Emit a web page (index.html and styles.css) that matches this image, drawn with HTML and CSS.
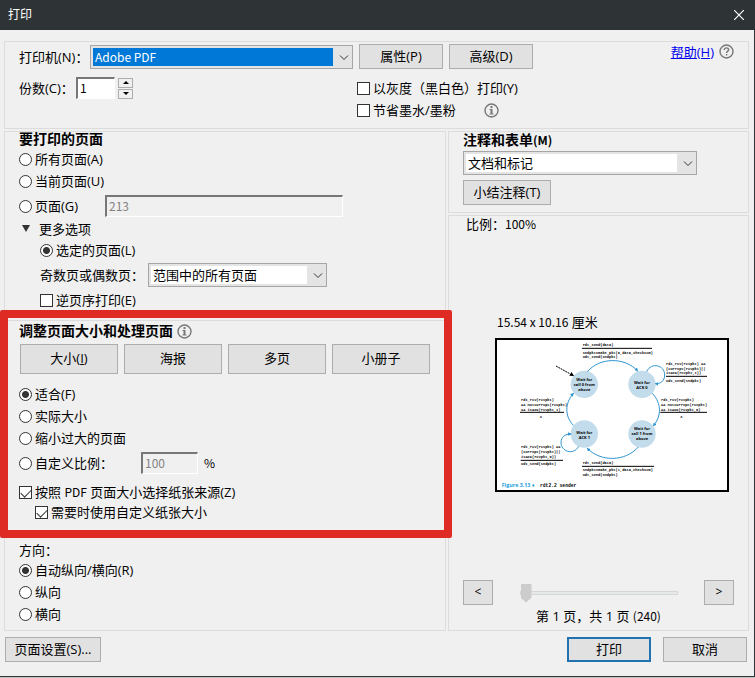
FILE: index.html
```html
<!DOCTYPE html>
<html lang="zh-CN">
<head>
<meta charset="utf-8">
<title>打印</title>
<link rel="stylesheet" href="styles.css">
</head>
<body>
<form class="dialog">
  <header class="titlebar">
    <h1 class="title">打印</h1>
    <button class="close" type="button" aria-label="关闭">
      <svg width="10" height="10" viewBox="0 0 10 10"><path d="M0 0L10 10M10 0L0 10" stroke="#fff" stroke-width="1.2"/></svg>
    </button>
  </header>

  <main class="content">
    <section class="group printer">
      <div class="printer-main">
        <div class="printer-row">
          <label for="printer">打印机(N)：</label>
          <span class="select printer-select">
            <select id="printer" class="focused latin"><option>Adobe PDF</option></select>
            <svg class="chevron" width="10" height="6" viewBox="0 0 10 6"><path d="M1 .5L5 4.5L9 .5"/></svg>
          </span>
          <button class="btn wide" type="button">属性(P)</button>
          <button class="btn wide" type="button">高级(D)</button>
        </div>
        <div class="copies-row">
          <div class="copies">
            <label for="copies">份数(C)：</label>
            <input id="copies" class="field copies-field latin" type="text" value="1">
            <span class="spinner">
              <button type="button" aria-label="增加"><svg width="6" height="3" viewBox="0 0 6 3"><path d="M3 0L6 3H0z"/></svg></button>
              <button type="button" aria-label="减少"><svg width="6" height="3" viewBox="0 0 6 3"><path d="M3 3L6 0H0z"/></svg></button>
            </span>
          </div>
          <div class="ink">
            <label class="row"><input type="checkbox">以灰度（黑白色）打印(Y)</label>
            <div class="row ink-save">
              <label class="row"><input type="checkbox">节省墨水/墨粉</label>
              <svg class="info" width="15" height="15" viewBox="0 0 15 15"><circle cx="7.5" cy="7.5" r="6.5"/><path class="glyph" d="M6.5 3h2v2h-2zM5.5 6h3v4.5h1v1h-4v-1h1V7h-1z"/></svg>
            </div>
          </div>
        </div>
      </div>
      <div class="help">
        <a href="#help">帮助(H)</a>
        <svg class="info" width="15" height="15" viewBox="0 0 15 15"><circle cx="7.5" cy="7.5" r="6.5"/><path d="M5.3 6C5.3 3.2 9.7 3.2 9.7 5.8C9.7 7.2 7.6 7.2 7.6 9M7.6 10V11.4"/></svg>
      </div>
    </section>

    <div class="columns">
      <div class="column">
        <section class="group pages">
          <h2>要打印的页面</h2>
          <label class="row"><input type="radio" name="range">所有页面(A)</label>
          <label class="row"><input type="radio" name="range">当前页面(U)</label>
          <div class="row tall">
            <label class="row range-label"><input type="radio" name="range">页面(G)</label>
            <input class="field disabled range-field latin" type="text" value="213" aria-label="页面范围" disabled>
          </div>
          <button class="more" type="button"><svg width="8" height="7" viewBox="0 0 8 7"><path d="M0 0H8L4 7z" fill="#333"/></svg>更多选项</button>
          <div class="nested">
            <label class="row"><input type="radio" name="selected" checked>选定的页面(L)</label>
            <div class="row tall">
              <label class="subset-label" for="subset">奇数页或偶数页：</label>
              <span class="select subset-select">
                <select id="subset"><option>范围中的所有页面</option></select>
                <svg class="chevron" width="10" height="6" viewBox="0 0 10 6"><path d="M1 .5L5 4.5L9 .5"/></svg>
              </span>
            </div>
            <label class="row"><input type="checkbox">逆页序打印(E)</label>
          </div>
        </section>

        <section class="group sizing">
          <div class="heading-row">
            <h2>调整页面大小和处理页面</h2>
            <svg class="info" width="15" height="15" viewBox="0 0 15 15"><circle cx="7.5" cy="7.5" r="6.5"/><path class="glyph" d="M6.5 3h2v2h-2zM5.5 6h3v4.5h1v1h-4v-1h1V7h-1z"/></svg>
          </div>
          <div class="modes">
            <button class="btn" type="button">大小(<u>I</u>)</button>
            <button class="btn" type="button">海报</button>
            <button class="btn" type="button">多页</button>
            <button class="btn" type="button">小册子</button>
          </div>
          <label class="row"><input type="radio" name="scale" checked>适合(F)</label>
          <label class="row"><input type="radio" name="scale">实际大小</label>
          <label class="row"><input type="radio" name="scale">缩小过大的页面</label>
          <div class="row tall">
            <label class="row scale-label"><input type="radio" name="scale">自定义比例：</label>
            <input class="field disabled scale-field latin" type="text" value="100" aria-label="自定义比例" disabled>
            <span class="latin">%</span>
          </div>
          <div class="paper">
            <label class="row"><input type="checkbox" checked><span>按照 <span class="latin">PDF</span> 页面大小选择纸张来源(Z)</span></label>
            <label class="row custom"><input type="checkbox" checked>需要时使用自定义纸张大小</label>
          </div>
          <h3>方向：</h3>
          <label class="row"><input type="radio" name="orientation" checked>自动纵向/横向(R)</label>
          <label class="row"><input type="radio" name="orientation">纵向</label>
          <label class="row"><input type="radio" name="orientation">横向</label>
          <div class="highlight"></div>
        </section>
      </div>

      <div class="column">
        <section class="group comments">
          <h2><label for="comments">注释和表单<span class="latin">(M)</span></label></h2>
          <span class="select comments-select">
            <select id="comments"><option>文档和标记</option></select>
            <svg class="chevron" width="10" height="6" viewBox="0 0 10 6"><path d="M1 .5L5 4.5L9 .5"/></svg>
          </span>
          <button class="btn summary" type="button">小结注释(T)</button>
        </section>

        <section class="group preview">
          <p class="zoom">比例：<span class="latin">100%</span></p>
          <figure class="sheet">
            <figcaption><span class="latin">15.54 x 10.16</span> 厘米</figcaption>
            <svg class="page" viewBox="15 84 702 462">
              <defs>
                <marker id="tip" viewBox="0 0 10 10" refX="8" refY="5" markerWidth="11" markerHeight="11" markerUnits="userSpaceOnUse" orient="auto"><path d="M0 0L10 5L0 10z" fill="#2f95cf"/></marker>
                <marker id="tip-dark" viewBox="0 0 10 10" refX="8" refY="5" markerWidth="13" markerHeight="13" markerUnits="userSpaceOnUse" orient="auto"><path d="M0 0L10 5L0 10z" fill="#000"/></marker>
              </defs>
              <rect x="18" y="87" width="696" height="456" fill="#fff" stroke="#000" stroke-width="6"/>
              <g fill="#c3dceb">
                <circle cx="283" cy="223" r="41"/><circle cx="456" cy="223" r="41"/>
                <circle cx="283" cy="372" r="41"/><circle cx="456" cy="372" r="41"/>
              </g>
              <g class="edges">
                <path d="M292 185C330 141 404 141 443 183"/>
                <path d="M487 250C515 280 515 319 490 347"/>
                <path d="M445 411C405 456 332 456 292 415"/>
                <path d="M250 346C224 319 224 280 250 250"/>
                <path d="M470 185C484 155 524 165 524 195C524 214 510 222 496 221"/>
                <path d="M266 409C250 438 213 424 213 398C213 380 226 372 243 372"/>
              </g>
              <path d="M198 168L250 197" stroke="#000" stroke-width="3" stroke-dasharray="6 2" marker-end="url(#tip-dark)"/>
              <g class="rules">
                <path d="M276 115H486M528 199H651M511 307H651M90 307H222M92 451H219M276 469H492"/>
              </g>
              <g class="state">
                <text x="283" y="212">Wait for</text><text x="283" y="227">call 0 from</text><text x="283" y="242">above</text>
                <text x="456" y="221">Wait for</text><text x="456" y="236">ACK 0</text>
                <text x="283" y="371">Wait for</text><text x="283" y="386">ACK 1</text>
                <text x="456" y="361">Wait for</text><text x="456" y="376">call 1 from</text><text x="456" y="391">above</text>
              </g>
              <g class="code">
                <text x="278" y="108">rdt_send(data)</text>
                <text x="278" y="132">sndpkt=make_pkt(0,data,checksum)</text>
                <text x="278" y="145">udt_send(sndpkt)</text>
                <text x="528" y="164">rdt_rcv(rcvpkt) &amp;&amp;</text>
                <text x="528" y="179">(corrupt(rcvpkt)||</text>
                <text x="528" y="192">isACK(rcvpkt,1))</text>
                <text x="528" y="216">udt_send(sndpkt)</text>
                <text x="513" y="273">rdt_rcv(rcvpkt)</text>
                <text x="513" y="289">&amp;&amp; notcorrupt(rcvpkt)</text>
                <text x="513" y="303">&amp;&amp; isACK(rcvpkt,0)</text>
                <text x="571" y="324">Λ</text>
                <text x="93" y="273">rdt_rcv(rcvpkt)</text>
                <text x="93" y="289">&amp;&amp; notcorrupt(rcvpkt)</text>
                <text x="93" y="303">&amp;&amp; isACK(rcvpkt,1)</text>
                <text x="149" y="324">Λ</text>
                <text x="93" y="415">rdt_rcv(rcvpkt) &amp;&amp;</text>
                <text x="93" y="430">(corrupt(rcvpkt)||</text>
                <text x="93" y="444">isACK(rcvpkt,0))</text>
                <text x="93" y="466">udt_send(sndpkt)</text>
                <text x="278" y="463">rdt_send(data)</text>
                <text x="278" y="483">sndpkt=make_pkt(1,data,checksum)</text>
                <text x="278" y="498">udt_send(sndpkt)</text>
              </g>
              <text class="caption" x="35" y="530">Figure 3.13 ♦</text>
              <text class="caption-code" x="150" y="530">rdt2.2 sender</text>
            </svg>
          </figure>
          <div class="pager">
            <button class="btn step" type="button" aria-label="上一页">&lt;</button>
            <input class="slider" type="range" min="1" max="2" value="1" aria-label="页码">
            <button class="btn step" type="button" aria-label="下一页">&gt;</button>
          </div>
          <p class="page-count">第 1 页，共 1 页 <span class="latin">(240)</span></p>
        </section>
      </div>
    </div>
  </main>

  <footer class="actions">
    <button class="btn setup" type="button">页面设置(S)...</button>
    <button class="btn wide primary" type="submit">打印</button>
    <button class="btn wide" type="button">取消</button>
  </footer>
</form>
</body>
</html>
```
FILE: styles.css
```css
* { box-sizing: border-box; }

body {
  margin: 0;
  background: #c4c6c4;
  color: #000;
  font: 13px/18px "Open Sans", "Noto Sans CJK SC", sans-serif;
  overflow: hidden;
}

button, input, select { font: inherit; color: inherit; margin: 0; }
h1, h2, h3, p, figure { margin: 0; font-size: 13px; }
h1, h3 { font-weight: 400; }
h2 { font-size: 14px; }
svg { display: block; fill: none; flex: none; }

.latin { font-family: "Noto Sans CJK SC", sans-serif; font-size: 12px; }

.dialog {
  background: #f0f0f0;
  border-right: 1px solid #2e3336;
  border-bottom: 1px solid #2e3336;
}

.titlebar {
  display: flex;
  align-items: center;
  justify-content: space-between;
  height: 30px;
  padding: 0 10px 0 8px;
  background: #2e3336;
  color: #fff;
}
.title { font-size: 12px; }
.close { padding: 0; border: 0; background: none; }

.content { padding: 11px 5px 0 4px; }
.group { border: 1px solid #dcdcdc; padding: 0 14px; }

.row { display: flex; align-items: center; height: 22px; white-space: nowrap; }
.row.tall { height: 28px; }

input[type="radio"], input[type="checkbox"] {
  appearance: none;
  flex: none;
  width: 13px;
  height: 13px;
  margin-right: 3px;
  border: 1px solid #333;
  background: #fff;
}
input[type="radio"] { border-radius: 50%; }
input[type="radio"]:checked { background: radial-gradient(circle, #333 3px, #fff 4px); }
input[type="checkbox"]:checked::before {
  content: "";
  display: block;
  width: 9px;
  height: 5px;
  margin: 2px 1px;
  border: solid #333;
  border-width: 0 0 1px 1px;
  transform: rotate(-45deg);
}

.btn {
  height: 25px;
  padding: 0 0 2px;
  border: 1px solid #adadad;
  border-radius: 0;
  background: #e1e1e1;
  line-height: 18px;
}
.wide { width: 84px; }
.primary { border: 2px solid #2072b0; }

.field {
  height: 22px;
  padding: 0 2px 2px;
  border: 2px solid;
  border-color: #777 #fff #fff #777;
  border-width: 2px 1px 1px 2px;
  border-radius: 0;
  background: #fff;
}
.disabled { background: #f0f0f0; color: #838383; }

.select { position: relative; display: block; height: 24px; }
.select select {
  appearance: none;
  display: block;
  width: 100%;
  height: 100%;
  padding: 2px 19px 2px 2px;
  border: 1px solid #a6a6a6;
  border-radius: 0;
  background: linear-gradient(#fff, #fff) content-box, #e4e4e4;
  text-indent: 2px;
  line-height: 16px;
}
.select .focused { background: linear-gradient(#0078d7, #0078d7) content-box, #e4e4e4; color: #fff; }
.chevron { position: absolute; right: 4px; top: 10px; stroke: #333; pointer-events: none; }

.info { stroke: #777; stroke-width: 1.4; }
.info .glyph { fill: #777; stroke: none; }

/* Printer */
.printer { display: flex; justify-content: space-between; height: 88px; padding: 2px 14px 0; }
.printer-main { width: 514px; }
.printer-row { display: flex; align-items: center; gap: 6px; }
.printer-row label { width: 65px; white-space: nowrap; }
.printer-select { flex: 1; }
.copies-row { display: flex; justify-content: space-between; padding-top: 8px; }
.copies { display: flex; align-items: center; height: 22px; }
.copies label { width: 57px; white-space: nowrap; }
.copies-field { width: 39px; }
.spinner { display: grid; gap: 1px; margin-left: 3px; }
.spinner button {
  display: grid;
  place-items: center;
  width: 15px;
  height: 10px;
  padding: 0;
  border: 1px solid #adadad;
  background: #f0f0f0;
}
.spinner path { fill: #000; }
.ink { width: 176px; }
.ink-save { gap: 28px; }
.help { display: flex; gap: 5px; height: 15px; align-items: center; }
.help a { color: #00e; }

/* Columns */
.columns { display: grid; grid-template-columns: 442fr 301fr; gap: 2px; margin-top: 2px; }
.column { display: flex; flex-direction: column; gap: 2px; }

.pages { padding-bottom: 6px; }
.pages h2 { line-height: 14px; padding-bottom: 2px; }
.range-label { width: 86px; }
.range-field { width: 238px; }
.more {
  display: flex;
  align-items: center;
  gap: 9px;
  height: 19px;
  padding: 0 3px 2px;
  border: 0;
  background: none;
}
.nested { padding-left: 21px; }
.subset-label { width: 108px; }
.subset-select { width: 179px; }

.sizing { position: relative; padding-bottom: 5px; }
.heading-row { display: flex; align-items: center; gap: 4px; height: 20px; }
.modes { display: grid; grid-template-columns: repeat(4, 98px); gap: 6px; padding: 3px 0 9px 1px; }
.modes .btn { height: 30px; }
.scale-label { width: 122px; }
.scale-field { width: 57px; margin-right: 6px; }
.paper { padding: 4px 0 20px; }
.custom { height: 18px; padding-left: 16px; }
.highlight {
  position: absolute;
  top: -11px;
  right: -7px;
  left: -5px;
  height: 228px;
  border: 8px solid #de2c24;
  border-radius: 2px;
  pointer-events: none;
}

.comments { padding-bottom: 7px; }
.comments h2 { line-height: 16px; padding-bottom: 3px; }
.comments-select { width: 234px; }
.summary { width: 88px; margin-top: 5px; display: block; }

.preview { flex: 1; }
.zoom { padding-left: 3px; line-height: 16px; }
.sheet { width: 234px; margin: 81px 0 0 32px; }
.sheet figcaption { padding: 0 0 7px 2px; }
.page { width: 100%; }
.pager { display: flex; align-items: center; justify-content: space-between; margin-top: 88px; }
.step { width: 30px; font-size: 12px; }
.slider { appearance: none; width: 158px; height: 20px; background: none; }
.slider::-webkit-slider-runnable-track {
  height: 4px;
  border: 1px solid #d6d6d6;
  background: #e7eaea;
}
.slider::-webkit-slider-thumb {
  appearance: none;
  width: 11px;
  height: 19px;
  margin-top: -8px;
  background: #ccc;
  clip-path: polygon(0 0, 100% 0, 100% 75%, 50% 100%, 0 75%);
}
.page-count { padding-top: 2px; text-align: center; }

/* State diagram */
.edges path { stroke: #2f95cf; stroke-width: 3; marker-end: url(#tip); }
.rules path { stroke: #000; stroke-width: 3; }
.page text { fill: #000; }
.state { font: 700 12px "Open Sans", sans-serif; text-anchor: middle; }
.code { font: 700 11px "Liberation Mono", monospace; }
.page .caption { font: 700 16px "Open Sans", sans-serif; fill: #1ba0dc; }
.caption-code { font: 700 14px "Liberation Mono", monospace; }

.actions { display: flex; gap: 12px; padding: 6px 7px 14px 5px; }
.setup { width: 96px; margin-right: auto; }
```
